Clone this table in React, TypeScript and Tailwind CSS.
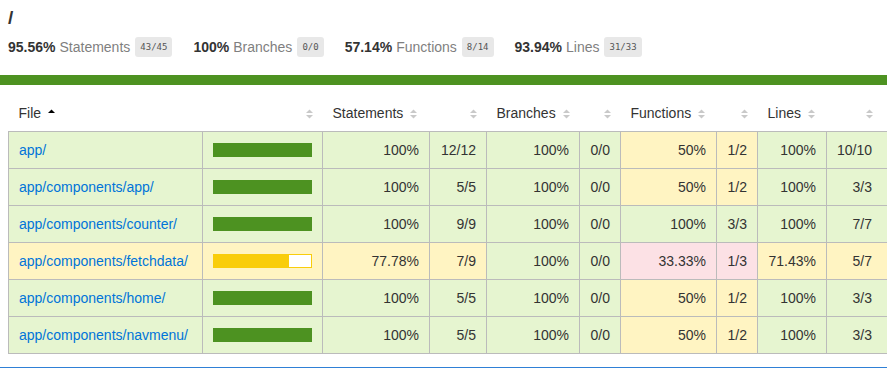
import React from 'react';

type Level = 'high' | 'medium' | 'low';

interface Metric {
  pct: number;
  abs: string;
}

interface Row {
  file: string;
  statements: Metric;
  branches: Metric;
  functions: Metric;
  lines: Metric;
}

const summary = [
  { pct: '95.56%', label: 'Statements', abs: '43/45' },
  { pct: '100%', label: 'Branches', abs: '0/0' },
  { pct: '57.14%', label: 'Functions', abs: '8/14' },
  { pct: '93.94%', label: 'Lines', abs: '31/33' },
];

const rows: Row[] = [
  {
    file: 'app/',
    statements: { pct: 100, abs: '12/12' },
    branches: { pct: 100, abs: '0/0' },
    functions: { pct: 50, abs: '1/2' },
    lines: { pct: 100, abs: '10/10' },
  },
  {
    file: 'app/components/app/',
    statements: { pct: 100, abs: '5/5' },
    branches: { pct: 100, abs: '0/0' },
    functions: { pct: 50, abs: '1/2' },
    lines: { pct: 100, abs: '3/3' },
  },
  {
    file: 'app/components/counter/',
    statements: { pct: 100, abs: '9/9' },
    branches: { pct: 100, abs: '0/0' },
    functions: { pct: 100, abs: '3/3' },
    lines: { pct: 100, abs: '7/7' },
  },
  {
    file: 'app/components/fetchdata/',
    statements: { pct: 77.78, abs: '7/9' },
    branches: { pct: 100, abs: '0/0' },
    functions: { pct: 33.33, abs: '1/3' },
    lines: { pct: 71.43, abs: '5/7' },
  },
  {
    file: 'app/components/home/',
    statements: { pct: 100, abs: '5/5' },
    branches: { pct: 100, abs: '0/0' },
    functions: { pct: 50, abs: '1/2' },
    lines: { pct: 100, abs: '3/3' },
  },
  {
    file: 'app/components/navmenu/',
    statements: { pct: 100, abs: '5/5' },
    branches: { pct: 100, abs: '0/0' },
    functions: { pct: 50, abs: '1/2' },
    lines: { pct: 100, abs: '3/3' },
  },
];

const level = (pct: number): Level => (pct >= 80 ? 'high' : pct >= 50 ? 'medium' : 'low');

const cellBg: Record<Level, string> = {
  high: 'bg-[#e6f5d0]',
  medium: 'bg-[#fff4c2]',
  low: 'bg-[#fce1e5]',
};

const barFill: Record<Level, string> = {
  high: 'bg-[#4d9221] border-[#4d9221]',
  medium: 'bg-[#f9cd0b] border-[#f9cd0b]',
  low: 'bg-[#c21f39] border-[#c21f39]',
};

const Sorter = () => (
  <svg width="7" height="10" viewBox="0 0 7 10" className="inline-block ml-[7px] align-middle">
    <polygon points="0,4 3.5,0.5 7,4" fill="#c9c9c9" />
    <polygon points="0,6 7,6 3.5,9.5" fill="#c9c9c9" />
  </svg>
);

const SortedAsc = () => (
  <svg width="7" height="10" viewBox="0 0 7 10" className="inline-block ml-[7px] align-middle">
    <polygon points="0,4 3.5,0.5 7,4" fill="#000" />
  </svg>
);

const td = 'border border-[#bbb] px-[10px] py-[10px] leading-[16px]';

const fmt = (pct: number) => `${pct}%`;

export default function App() {
  return (
    <div className="w-[887px] h-[368px] overflow-hidden bg-white text-[14px] text-[#333] font-['Liberation_Sans',Arial,sans-serif]">
      {/* heading + totals */}
      <div className="px-[8px] pt-[6px]">
        <h1 className="text-[19px] font-bold leading-[23px]">/</h1>
        <div className="flex items-center mt-[8px] h-[20px]">
          {summary.map((s) => (
            <div key={s.label} className="flex items-center mr-[21px]">
              <span className="font-bold">{s.pct}</span>
              <span className="ml-[4px] text-[#7f7f7f]">{s.label}</span>
              <span className="ml-[5px] px-[5px] py-[4px] rounded-[3px] bg-[#e8e8e8] text-[#555] text-[9px] leading-[12px] font-['DejaVu_Sans_Mono',monospace]">
                {s.abs}
              </span>
            </div>
          ))}
        </div>
      </div>

      <div className="mt-[18px] h-[10px] bg-[#4d9221]" />

      <div className="pl-[8px] pt-[10px]">
        <table className="table-fixed border-collapse w-[887px]">
          <colgroup>
            <col className="w-[194px]" />
            <col className="w-[120px]" />
            <col className="w-[107px]" />
            <col className="w-[57px]" />
            <col className="w-[93px]" />
            <col className="w-[41px]" />
            <col className="w-[96px]" />
            <col className="w-[41px]" />
            <col className="w-[69px]" />
            <col className="w-[69px]" />
          </colgroup>
          <thead>
            <tr>
              <th className="p-[10px] leading-[16px] text-left font-normal whitespace-nowrap">
                File
                <SortedAsc />
              </th>
              <th className="p-[10px] leading-[16px] text-right font-normal">
                <Sorter />
              </th>
              <th className="p-[10px] leading-[16px] text-left font-normal whitespace-nowrap">
                Statements
                <Sorter />
              </th>
              <th className="p-[10px] leading-[16px] text-right font-normal">
                <Sorter />
              </th>
              <th className="p-[10px] leading-[16px] text-left font-normal whitespace-nowrap">
                Branches
                <Sorter />
              </th>
              <th className="p-[10px] leading-[16px] text-right font-normal">
                <Sorter />
              </th>
              <th className="p-[10px] leading-[16px] text-left font-normal whitespace-nowrap">
                Functions
                <Sorter />
              </th>
              <th className="p-[10px] leading-[16px] text-right font-normal">
                <Sorter />
              </th>
              <th className="p-[10px] leading-[16px] text-left font-normal whitespace-nowrap">
                Lines
                <Sorter />
              </th>
              <th className="py-[10px] pl-[10px] pr-[23px] leading-[16px] text-right font-normal">
                <Sorter />
              </th>
            </tr>
          </thead>
          <tbody>
            {rows.map((r) => {
              const sLv = level(r.statements.pct);
              const bLv = level(r.branches.pct);
              const fLv = level(r.functions.pct);
              const lLv = level(r.lines.pct);
              return (
                <tr key={r.file}>
                  <td className={`${td} ${cellBg[sLv]} whitespace-nowrap`}>
                    <a href="#" className="text-[#0074d9]">
                      {r.file}
                    </a>
                  </td>
                  <td className={`${td} ${cellBg[sLv]}`}>
                    <div className="flex justify-end items-center h-[16px]">
                      <div className={`flex w-[100px] h-[14px] border ${barFill[sLv]}`}>
                        <div className="h-full" style={{ width: `${r.statements.pct}%` }} />
                        <div className="h-full flex-1 bg-white" />
                      </div>
                    </div>
                  </td>
                  <td className={`${td} ${cellBg[sLv]} text-right`}>{fmt(r.statements.pct)}</td>
                  <td className={`${td} ${cellBg[sLv]} text-right`}>{r.statements.abs}</td>
                  <td className={`${td} ${cellBg[bLv]} text-right`}>{fmt(r.branches.pct)}</td>
                  <td className={`${td} ${cellBg[bLv]} text-right`}>{r.branches.abs}</td>
                  <td className={`${td} ${cellBg[fLv]} text-right`}>{fmt(r.functions.pct)}</td>
                  <td className={`${td} ${cellBg[fLv]} text-right`}>{r.functions.abs}</td>
                  <td className={`${td} ${cellBg[lLv]} text-right`}>{fmt(r.lines.pct)}</td>
                  <td className={`${td} ${cellBg[lLv]} text-right !pr-[23px]`}>{r.lines.abs}</td>
                </tr>
              );
            })}
          </tbody>
        </table>
      </div>

      <div className="mt-[13px] h-[2px] bg-[#2f80d6]" />
    </div>
  );
}
